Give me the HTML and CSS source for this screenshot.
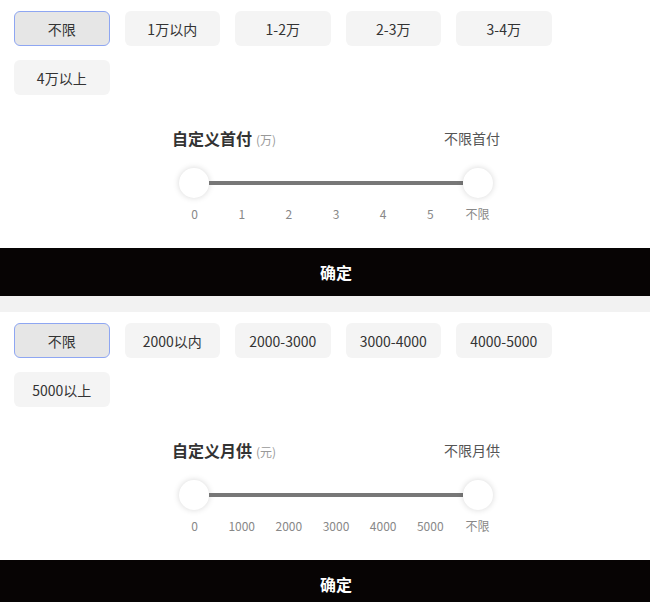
FILE: index.html
```html
<!DOCTYPE html>
<html lang="zh-CN">
<head>
<meta charset="utf-8">
<title>筛选</title>
<link rel="stylesheet" href="styles.css">
</head>
<body>
<div class="page">
  <section class="panel">
    <div class="options">
      <div class="opt selected">不限</div>
      <div class="opt">1万以内</div>
      <div class="opt">1-2万</div>
      <div class="opt">2-3万</div>
      <div class="opt">3-4万</div>
      <div class="opt">4万以上</div>
    </div>
    <div class="custom">
      <div class="custom-head">
        <div class="custom-title">自定义首付<span class="unit">(万)</span></div>
        <div class="custom-value">不限首付</div>
      </div>
      <div class="slider">
        <div class="thumb"></div>
        <div class="track"></div>
        <div class="thumb"></div>
      </div>
      <div class="ticks">
        <span>0</span><span>1</span><span>2</span><span>3</span><span>4</span><span>5</span><span>不限</span>
      </div>
    </div>
    <div class="confirm">确定</div>
  </section>
  <div class="band"></div>
  <section class="panel">
    <div class="options">
      <div class="opt selected">不限</div>
      <div class="opt">2000以内</div>
      <div class="opt">2000-3000</div>
      <div class="opt">3000-4000</div>
      <div class="opt">4000-5000</div>
      <div class="opt">5000以上</div>
    </div>
    <div class="custom">
      <div class="custom-head">
        <div class="custom-title">自定义月供<span class="unit">(元)</span></div>
        <div class="custom-value">不限月供</div>
      </div>
      <div class="slider">
        <div class="thumb"></div>
        <div class="track"></div>
        <div class="thumb"></div>
      </div>
      <div class="ticks">
        <span>0</span><span>1000</span><span>2000</span><span>3000</span><span>4000</span><span>5000</span><span>不限</span>
      </div>
    </div>
    <div class="confirm">确定</div>
  </section>
</div>
</body>
</html>
```
FILE: styles.css
```css
* { box-sizing: border-box; }
html, body {
  margin: 0;
  padding: 0;
  background: #fff;
}
body {
  font-family: "Noto Sans CJK SC", "Noto Sans", sans-serif;
  color: #333;
  width: 650px;
  overflow: hidden;
}
.panel {
  padding-top: 11px;
  background: #fff;
}
.options {
  display: flex;
  flex-wrap: wrap;
  gap: 14px 15px;
  padding: 0 14px;
}
.opt {
  width: 95.5px;
  height: 35px;
  border-radius: 6px;
  background: #f4f4f4;
  font-size: 14px;
  color: #333;
  display: flex;
  align-items: center;
  justify-content: center;
  line-height: 1;
}
.opt.selected {
  background: #e6e6e6;
  border: 1px solid #8ea6f2;
}
.custom {
  margin: 33px 0 0 171px;
  width: 330px;
}
.custom-head {
  display: flex;
  justify-content: space-between;
  align-items: center;
  height: 22px;
  padding-left: 1px;
  padding-right: 1px;
}
.custom-title {
  font-size: 16px;
  font-weight: 700;
  color: #333;
  line-height: 22px;
}
.unit {
  font-size: 12px;
  font-weight: 400;
  color: #999;
  margin-left: 4px;
}
.custom-value {
  font-size: 14px;
  color: #555;
  line-height: 22px;
  margin-top: -3px;
}
.slider {
  display: flex;
  align-items: center;
  margin-top: 18px;
  padding: 0 8px 0 8px;
  height: 30px;
}
.thumb {
  width: 30px;
  height: 30px;
  border-radius: 50%;
  background: #fff;
  box-shadow: 0 0 6px rgba(0, 0, 0, 0.16);
  flex: none;
}
.track {
  flex: 1;
  height: 4px;
  background: #777;
}
.ticks {
  display: flex;
  margin-top: 8px;
  height: 16px;
}
.ticks span {
  flex: 1;
  text-align: center;
  font-size: 12px;
  line-height: 16px;
  color: #888;
}
.confirm {
  margin-top: 26px;
  height: 48px;
  padding-left: 22px;
  background: #070404;
  color: #fff;
  font-size: 16px;
  font-weight: 700;
  display: flex;
  align-items: center;
  justify-content: center;
}
.band {
  height: 16px;
  background: #f2f2f2;
}
```
